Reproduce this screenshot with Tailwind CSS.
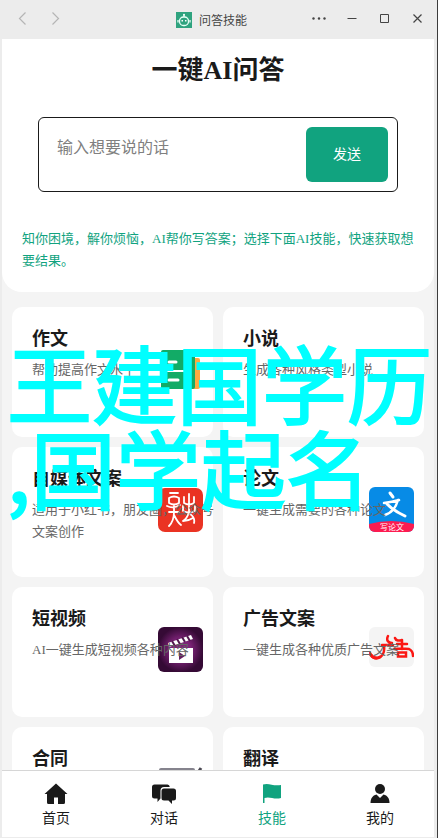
<!DOCTYPE html>
<html lang="zh-CN">
<head>
<meta charset="utf-8">
<meta name="viewport" content="width=device-width, initial-scale=1">
<title>问答技能</title>
<script src="https://cdn.jsdelivr.net/npm/@tailwindcss/browser@4"></script>
</head>
<body class="relative flex h-screen flex-col overflow-hidden border-r border-[#3c3c3c] bg-[#ececec] font-['Liberation_Serif','Noto_Sans_CJK_SC',serif] text-[#1a1a1a]">

  <!-- Window title bar -->
  <header class="grid h-[39px] shrink-0 grid-cols-[1fr_auto_1fr] items-center font-['Noto_Sans_CJK_SC',sans-serif]">
    <div class="flex gap-[13px] pl-3">
      <button type="button" aria-label="后退" class="size-5 text-[#b5b5b5]">
        <svg viewBox="0 0 20 20" fill="none" stroke="currentColor" stroke-width="1.2"><path d="M13.500 2.500 7.500 8.500 13.500 14.500"/></svg>
      </button>
      <button type="button" aria-label="前进" class="size-5 text-[#b5b5b5]">
        <svg viewBox="0 0 20 20" fill="none" stroke="currentColor" stroke-width="1.2"><path d="M7.500 2.500 13.500 8.500 7.500 14.500"/></svg>
      </button>
    </div>
    <div class="flex items-center gap-[7px] pr-[14px]">
      <svg class="size-4" viewBox="0 0 16 16"><path fill="#2fa37f" d="M0 0h16v16H0z"/><g fill="none" stroke="#e6fff6" stroke-width="1.300"><rect x="3.500" y="5" width="9" height="8.500" rx="4"/><path d="M8 5V3M2 8v2.500M14 8v2.500"/></g><circle cx="8" cy="2.800" r="1" fill="#fff"/><path stroke="#fff" stroke-width="1.400" d="M5.500 8.700h1.500M9 8.700h1.500"/></svg>
      <span class="text-[12px] leading-4 text-[#444]">问答技能</span>
    </div>
    <div class="flex justify-end gap-[13px] pr-[9px] text-[#444]">
      <button type="button" aria-label="更多" class="size-5"><svg viewBox="0 0 20 20" fill="currentColor"><circle cx="4.500" cy="8.500" r="1.200"/><circle cx="10" cy="8.500" r="1.200"/><circle cx="15.500" cy="8.500" r="1.200"/></svg></button>
      <button type="button" aria-label="最小化" class="size-5"><svg viewBox="0 0 20 20"><path stroke="currentColor" d="M5.500 8.500h9"/></svg></button>
      <button type="button" aria-label="最大化" class="size-5"><svg viewBox="0 0 20 20"><path fill="none" stroke="currentColor" d="M5.500 4.500h8v8h-8z"/></svg></button>
      <button type="button" aria-label="关闭" class="size-5"><svg viewBox="0 0 20 20"><path stroke="currentColor" stroke-width="1.200" d="m5.500 4.500 8 8m0-8-8 8"/></svg></button>
    </div>
  </header>

  <main class="ml-[2px] mr-[3px] min-h-0 flex-1 overflow-hidden bg-[#f4f4f4]">
    <section class="rounded-b-[20px] bg-white px-5 pb-5">
      <h1 class="pt-[13px] text-center text-[26px] leading-[38px] font-bold">一键AI问答</h1>
      <form class="mx-4 mt-[27px] flex rounded-md border border-[#1a1a1a] p-[9px]" onsubmit="return false">
        <textarea aria-label="问题" placeholder="输入想要说的话" class="block h-[55px] min-w-0 flex-1 resize-none pt-[7px] pl-[9px] font-['Noto_Sans_CJK_SC',sans-serif] text-[16px] leading-6 outline-none placeholder:text-[#808080]"></textarea>
        <button type="submit" class="h-[55px] w-[82px] rounded-md bg-[#11a37f] text-[14px] text-white">发送</button>
      </form>
      <p class="mt-9 text-[13px] leading-[22px] text-[#11a37f]">知你困境，解你烦恼，AI帮你写答案；选择下面AI技能，快速获取想要结果。</p>
    </section>

    <section aria-label="技能列表" class="grid grid-cols-2 gap-[10px] px-[10px] pt-[15px]">
      <a href="#" class="relative block h-[130px] rounded-[10px] bg-white pt-[19px] pl-5">
        <svg class="absolute top-10 right-[10px] size-[45px]" viewBox="0 0 45 45"><rect x="33" y="11" width="9" height="31" rx="2" fill="#ffa940"/><rect x="3" y="3" width="34" height="39" rx="2" fill="#12ab66"/><path stroke="#fff" stroke-width="3" stroke-linecap="round" d="M11 15h7M11 33h9"/><path stroke="#fff" stroke-width="2" d="M3 24h30"/></svg>
        <h2 class="relative text-[18px] leading-[26px] font-bold">作文</h2>
        <p class="relative mt-[7px] -mr-1 text-[13px] leading-[22px] text-[#666]">帮助提高作文水平</p>
      </a>
      <a href="#" class="relative block h-[130px] rounded-[10px] bg-white pt-[19px] pl-5">
        <h2 class="relative text-[18px] leading-[26px] font-bold">小说</h2>
        <p class="relative mt-[7px] -mr-1 text-[13px] leading-[22px] text-[#666]">生成各种风格类型小说</p>
      </a>
      <a href="#" class="relative block h-[130px] rounded-[10px] bg-white pt-[19px] pl-5">
        <svg class="absolute top-10 right-[10px] size-[45px]" viewBox="0 0 45 45"><rect y="1" width="45" height="44" rx="7" fill="#ea3323"/><g fill="none" stroke="#fff" stroke-width="1.800" stroke-linecap="round" stroke-linejoin="round"><path d="M12 6h8M11 11q5-3 10 0v5q-5 3-10 0zM9 19c4 2 8 2 13-1M16 19v6M11 25h10M16 25c0 6-2 11-5 14M16 28c2 4 4 8 7 10"/><path d="M26 10v6q5 3 10 0v-6M31 7v17M25 19v5q6 3 12 0v-5M31 25c-1 4-3 7-6 9 4 0 7-1 10-3M32 27c3 2 5 5 4 9"/></g></svg>
        <h2 class="relative text-[18px] leading-[26px] font-bold">自媒体文案</h2>
        <p class="relative mt-[7px] -mr-1 text-[13px] leading-[22px] text-[#666]">适用于小红书，朋友圈，公众号文案创作</p>
      </a>
      <a href="#" class="relative block h-[130px] rounded-[10px] bg-white pt-[19px] pl-5">
        <svg class="absolute top-10 right-[10px] size-[45px] rounded-md" viewBox="0 0 45 45"><path fill="#078be6" d="M0 0h45v45H0z"/><path fill="#fd1b50" d="M0 37q22-6 45 0v8H0z"/><g fill="none" stroke="#fff" stroke-linecap="round" stroke-width="2.500"><path stroke-width="3" d="m21 6 3 4"/><path d="M15 16q8-1 15-3M29 13c-2 7-7 13-13 15"/><path stroke-width="3" d="M18 17c5 5 9 8 18 12"/></g><text x="23" y="43" text-anchor="middle" font-family="Noto Sans CJK SC" font-size="8" fill="#fff">写论文</text></svg>
        <h2 class="relative text-[18px] leading-[26px] font-bold">论文</h2>
        <p class="relative mt-[7px] -mr-1 text-[13px] leading-[22px] text-[#666]">一键生成需要的各种论文</p>
      </a>
      <a href="#" class="relative block h-[130px] rounded-[10px] bg-white pt-[19px] pl-5">
        <svg class="absolute top-10 right-[10px] size-[45px] rounded-md" viewBox="0 0 45 45"><defs><radialGradient id="glow"><stop offset=".45" stop-color="#7d2378"/><stop offset="1" stop-color="#350a35"/></radialGradient></defs><path fill="url(#glow)" d="M0 0h45v45H0z"/><path fill="#fff" d="m10 16 23-8 2 4-24 8zM11 21h24v15H11z"/><path stroke="#551851" stroke-width="2" d="m14 14 3 5m2-7 3 5m2-7 3 5m2-6 3 5"/><path fill="#64205f" d="m21 25 6 4-6 4z"/></svg>
        <h2 class="relative text-[18px] leading-[26px] font-bold">短视频</h2>
        <p class="relative mt-[7px] -mr-1 text-[13px] leading-[22px] text-[#666]">AI一键生成短视频各种内容</p>
      </a>
      <a href="#" class="relative block h-[130px] rounded-[10px] bg-white pt-[19px] pl-5">
        <svg class="absolute top-10 right-[10px] h-[40px] w-[45px] rounded-md" viewBox="0 0 45 40"><path fill="#f4f4f4" d="M0 0h45v40H0z"/><g fill="none" stroke="#fb1713" stroke-width="2.500" stroke-linecap="round"><path d="M19 9c-2 4 0 7 4 7M13 18h11M15 19c1 7-2 12-8 12-3 0-5-2-6-5"/><path stroke-width="3" d="M2 28q4 5 9 2"/><path d="M26 11c1 3 4 3 7 2M28 17h10M33 13v9M25 22q8-1 15 0 4 2 4 7M29 25.500h8v4h-8z"/></g></svg>
        <h2 class="relative text-[18px] leading-[26px] font-bold">广告文案</h2>
        <p class="relative mt-[7px] -mr-1 text-[13px] leading-[22px] text-[#666]">一键生成各种优质广告文案</p>
      </a>
      <a href="#" class="relative block h-[130px] rounded-[10px] bg-white pt-[19px] pl-5">
        <svg class="absolute top-10 right-[10px] size-[45px]" viewBox="0 0 45 45"><rect x="1" y="1" width="36" height="43" rx="2" fill="#85838d"/><path fill="#fff" d="M4 4h30v37H4z"/><path stroke="#4a4852" stroke-width="3" d="m43 1-12 18"/></svg>
        <h2 class="relative text-[18px] leading-[26px] font-bold">合同</h2>
      </a>
      <a href="#" class="relative block h-[130px] rounded-[10px] bg-white pt-[19px] pl-5">
        <h2 class="relative text-[18px] leading-[26px] font-bold">翻译</h2>
      </a>
    </section>
  </main>

  <nav aria-label="主导航" class="mr-[3px] mb-px ml-[2px] grid h-[67px] shrink-0 grid-cols-4 border-t border-[#d6d6d6] bg-white text-[14px] leading-5">
    <a href="#" class="flex flex-col items-center pt-[11px]">
      <svg class="size-6" viewBox="0 0 24 24" fill="currentColor"><path d="M12 1.500 23.500 12H21v8.500q0 1.500-1.500 1.500H14v-6.500h-4V22H4.500Q3 22 3 20.500V12H.500z"/></svg>
      <span class="mt-[3px]">首页</span>
    </a>
    <a href="#" class="flex flex-col items-center pt-[11px]">
      <svg class="size-6" viewBox="0 0 24 24" fill="currentColor"><path d="M2.500 2.500h13q2 0 2.300 2.500H12Q8.500 5 8.500 8.500v8L5.500 20v-3.500H2.500q-2.500 0-2.500-2.500V5Q0 2.500 2.500 2.500z"/><path d="M12 6.500h9.500Q24 6.500 24 9v7q0 2.500-2.500 2.500H20V22l-3.500-3.500H12Q9.500 18.500 9.500 16V9q0-2.500 2.500-2.500z"/></svg>
      <span class="mt-[3px]">对话</span>
    </a>
    <a href="#" aria-current="page" class="flex flex-col items-center pt-[11px] text-[#11a37f]">
      <svg class="size-6" viewBox="0 0 24 24" fill="currentColor"><path d="M3 2.500c6-2 10 2 18 .5v13c-7 2-11-2-16.500 0v5H3z"/></svg>
      <span class="mt-[3px]">技能</span>
    </a>
    <a href="#" class="flex flex-col items-center pt-[11px]">
      <svg class="size-6" viewBox="0 0 24 24" fill="currentColor"><circle cx="12" cy="7" r="5"/><path d="M8.500 12.500 12 16l3.500-3.500c4 1 6 4 6 8.500h-19c0-4.500 2-7.500 6-8.500z"/></svg>
      <span class="mt-[3px]">我的</span>
    </a>
  </nav>

  <!-- Caption over the window -->
  <p class="pointer-events-none absolute inset-x-0 top-[338px] pl-[7px] font-['Noto_Sans_CJK_SC',sans-serif] text-[85px] leading-[85px] font-normal whitespace-nowrap text-[#00ffff] [-webkit-text-stroke:2px_#00ffff]">王建国学历<br>,国学起名</p>
</body>
</html>
